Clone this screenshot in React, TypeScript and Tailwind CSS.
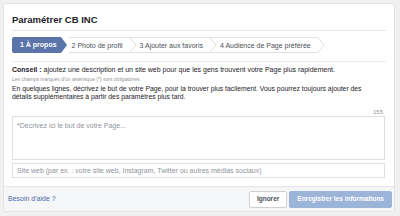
import React from 'react';

const font = { fontFamily: '"Liberation Sans", Arial, sans-serif' };

function Chevron({ last = false, active = false }: { last?: boolean; active?: boolean }) {
  return (
    <svg width="8" height="16" viewBox="0 0 8 16" className="shrink-0 block">
      {!last && !active && <line x1="0" y1="0.5" x2="8" y2="0.5" stroke="#dddfe2" />}
      {!last && !active && <line x1="0" y1="15.5" x2="8" y2="15.5" stroke="#dddfe2" />}
      {active ? (
        <polygon points="0,0 6,8 0,16" fill="#5a74aa" />
      ) : (
        <polyline points="0.5,0 7,8 0.5,16" fill="none" stroke="#dddfe2" />
      )}
    </svg>
  );
}

function Tabs() {
  const tabs = ['2 Photo de profil', '3 Ajouter aux favoris', '4 Audience de Page préférée'];
  return (
    <div className="flex items-stretch h-[16px] text-[7px] leading-[16px]">
      <div className="flex">
        <div className="bg-[#5a74aa] text-white font-bold pl-[8px] pr-[4px] rounded-l-[2px] h-[16px]">
          1 À propos
        </div>
        <Chevron active />
      </div>
      {tabs.map((t, i) => (
        <div key={t} className="flex">
          <div className="h-[16px] border-y border-[#dddfe2] pl-[3px] pr-[6px] text-[#4b4f56]">{t}</div>
          <Chevron last={i === tabs.length - 1} />
        </div>
      ))}
    </div>
  );
}

export default function App() {
  return (
    <div className="w-[400px] h-[216px] bg-[#f0f0f0] pt-[3px] pl-[3px]" style={font}>
      <div className="w-[392px] h-[209px] bg-white border border-[#e2e3e6] rounded-[3px] flex flex-col overflow-hidden">
        <div className="px-[8px]">
          <div className="pt-[10px] pb-[4px] border-b border-[#e5e5e5]">
            <h1 className="text-[9.5px] leading-[12px] font-bold text-[#1d2129]">Paramétrer CB INC</h1>
          </div>
          <div className="mt-[6px] pb-[8px] border-b border-[#e9ebee]">
            <Tabs />
          </div>
          <p className="mt-[3px] text-[7px] leading-[9px] text-[#1d2129]">
            <span className="font-bold">Conseil :</span> ajoutez une description et un site web pour que les gens trouvent votre Page plus rapidement.
          </p>
          <p className="mt-[2px] text-[5px] leading-[6px] text-[#90949c]">
            Les champs marqués d'un astérisque (*) sont obligatoires.
          </p>
          <p className="mt-[3px] text-[6.8px] leading-[8px] text-[#1d2129] pr-[10px]">
            En quelques lignes, décrivez le but de votre Page, pour la trouver plus facilement. Vous pourrez toujours ajouter des détails supplémentaires à partir des paramètres plus tard.
          </p>
          <div className="mt-[7px] text-right text-[6px] leading-[8px] text-[#90949c] pr-[3px]">155</div>
          <div className="mt-[0px] h-[44px] border border-[#dddfe2] px-[4px] pt-[5px] text-[7px] leading-[8px] text-[#90949c] mr-[1px]">
            *Décrivez ici le but de votre Page...
          </div>
          <div className="mt-[3px] h-[15px] border border-[#dddfe2] px-[4px] text-[7px] leading-[13px] text-[#90949c] mr-[1px]">
            Site web (par ex. : votre site web, Instagram, Twitter ou autres médias sociaux)
          </div>
        </div>
        <div className="mt-auto h-[25px] bg-[#f5f6f7] border-t border-[#e5e5e5] flex items-center pl-[4px] pr-[2px]">
          <a className="text-[7px] text-[#4b67a1]">Besoin d'aide ?</a>
          <div className="ml-auto flex gap-[2px]">
            <button className="h-[17px] px-[7px] bg-white border border-[#ced0d4] rounded-[2px] text-[6.5px] font-bold text-[#4b4f56]">
              Ignorer
            </button>
            <button className="h-[17px] px-[7px] bg-[#9cb4d8] border border-[#9cb4d8] rounded-[2px] text-[6.5px] font-bold text-white">
              Enregistrer les informations
            </button>
          </div>
        </div>
      </div>
    </div>
  );
}
